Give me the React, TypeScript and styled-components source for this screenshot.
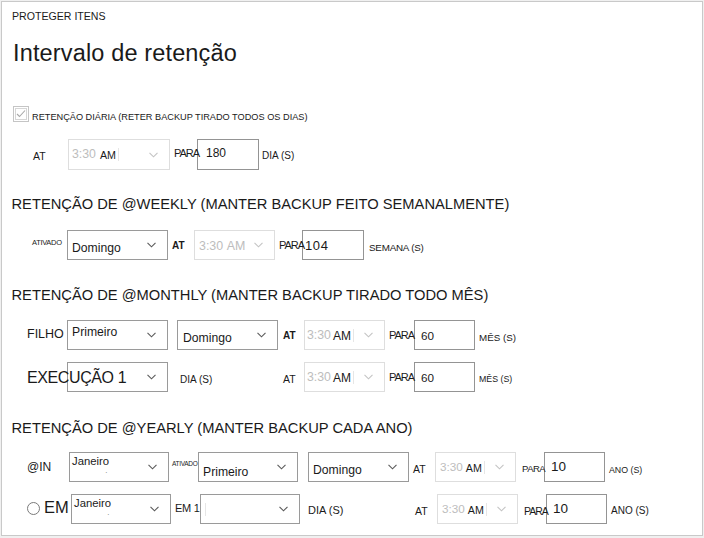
import React from "react";
import styled, { createGlobalStyle } from "styled-components";

const GlobalStyle = createGlobalStyle`
  html, body {
    margin: 0;
    padding: 0;
    background: #f0f0f0;
  }
  body {
    font-family: "Liberation Sans", Arial, sans-serif;
    color: #1a1a1a;
  }
`;

const Frame = styled.div`
  box-sizing: border-box;
  width: 702px;
  height: 535px;
  margin: 1px 0 0 1px;
  padding-top: 7px;
  background: #fff;
  border: 1px solid #c9c9c9;
  overflow: hidden;
`;

const Crumb = styled.div`
  height: 14px;
  line-height: 14px;
  padding-left: 10px;
  font-size: 10.6px;
`;

const Title = styled.h1`
  margin: 16px 0 0;
  height: 28px;
  line-height: 28px;
  padding-left: 11px;
  font-size: 23.5px;
  font-weight: normal;
  letter-spacing: 0.15px;
`;

const CheckLine = styled.div`
  display: flex;
  align-items: center;
  height: 16px;
  margin-top: 39px;
  padding-left: 11px;
`;

const DailyCaption = styled.span`
  margin: 6px 0 0 3px;
  font-size: 9.2px;
  white-space: nowrap;
`;

const Heading = styled.h2<{ $mt: number }>`
  margin: ${(p) => p.$mt}px 0 0;
  height: 20px;
  line-height: 20px;
  padding-left: 9.5px;
  font-size: 14.7px;
  font-weight: normal;
  white-space: nowrap;
`;

const Row = styled.div<{ $mt: number; $h: number; $pl: number }>`
  display: flex;
  align-items: center;
  height: ${(p) => p.$h}px;
  margin-top: ${(p) => p.$mt}px;
  padding-left: ${(p) => p.$pl}px;
  & > * {
    flex-shrink: 0;
  }
`;

const Label = styled.span<{
  $w?: number;
  $pl?: number;
  $size: number;
  $dy?: number;
  $bold?: boolean;
  $ls?: number;
}>`
  box-sizing: border-box;
  position: relative;
  z-index: 1;
  width: ${(p) => (p.$w ? `${p.$w}px` : "auto")};
  padding-left: ${(p) => p.$pl ?? 0}px;
  margin-top: ${(p) => Math.max(0, (p.$dy ?? 0) * 2)}px;
  margin-bottom: ${(p) => Math.max(0, -(p.$dy ?? 0) * 2)}px;
  font-size: ${(p) => p.$size}px;
  font-weight: ${(p) => (p.$bold ? "bold" : "normal")};
  letter-spacing: ${(p) => p.$ls ?? 0}px;
  line-height: 1.2;
  white-space: nowrap;
`;

const Spacer = styled.span<{ $w: number }>`
  width: ${(p) => p.$w}px;
`;

const Box = styled.div<{ $w: number; $pl: number; $disabled?: boolean }>`
  box-sizing: border-box;
  display: flex;
  align-items: center;
  width: ${(p) => p.$w}px;
  height: 100%;
  padding-left: ${(p) => p.$pl}px;
  border: 1px solid ${(p) => (p.$disabled ? "#dedede" : "#9a9a9a")};
  background: transparent;
  white-space: nowrap;
`;

const BoxText = styled.span<{ $size: number; $shift?: number; $ls?: number; $color?: string }>`
  margin-top: ${(p) => Math.max(0, (p.$shift ?? 0) * 2)}px;
  margin-bottom: ${(p) => Math.max(0, -(p.$shift ?? 0) * 2)}px;
  font-size: ${(p) => p.$size}px;
  letter-spacing: ${(p) => p.$ls ?? 0}px;
  color: ${(p) => p.$color ?? "#1a1a1a"};
  line-height: 1.2;
`;

const Tick = styled.span`
  margin-left: -4px;
  font-size: 7px;
  color: #555;
  vertical-align: -7px;
`;

const Caret = styled.span<{ $gap: number }>`
  width: 1px;
  height: 13px;
  margin-left: ${(p) => p.$gap}px;
  background: #e6e6e6;
`;

const ChevronIcon = styled.svg`
  margin-left: auto;
  margin-right: 11px;
  flex-shrink: 0;
`;

const Radio = styled.span`
  box-sizing: border-box;
  width: 13px;
  height: 13px;
  border: 1px solid #7a7a7a;
  border-radius: 50%;
`;

const RadioCell = styled.span<{ $w: number }>`
  display: flex;
  align-items: center;
  width: ${(p) => p.$w}px;
  position: relative;
  z-index: 1;
  & > span:last-child {
    margin-left: 4px;
    margin-bottom: 3px;
    font-size: 16.5px;
    line-height: 1.2;
  }
`;

const Chevron = ({ faded }: { faded?: boolean }) => (
  <ChevronIcon width="9" height="6" viewBox="0 0 9 6">
    <polyline
      points="0.5,0.8 4.5,4.8 8.5,0.8"
      fill="none"
      stroke={faded ? "#c4c4c4" : "#5a5a5a"}
      strokeWidth="1.1"
    />
  </ChevronIcon>
);

type DropdownProps = {
  w: number;
  pl?: number;
  size?: number;
  shift?: number;
  text?: string;
  tick?: boolean;
  caret?: boolean;
};

const Dropdown = ({ w, pl = 4, size = 12.2, shift = 0, text, tick, caret }: DropdownProps) => (
  <Box $w={w} $pl={pl}>
    {caret && <Caret $gap={0} />}
    {text && (
      <BoxText $size={size} $shift={shift}>
        {text}
        {tick && <Tick>ˏ</Tick>}
      </BoxText>
    )}
    <Chevron />
  </Box>
);

type TimeProps = {
  w: number;
  pl: number;
  num: number;
  am: number;
  gap: number;
  dark?: boolean;
  caret?: boolean;
  shift?: number;
};

const TimeSelect = ({ w, pl, num, am, gap, dark, caret, shift = 0 }: TimeProps) => (
  <Box $w={w} $pl={pl} $disabled>
    <BoxText $size={num} $shift={shift} $color="#bdbdbd">
      3:30
    </BoxText>
    <BoxText
      $size={am}
      $shift={shift + 0.8}
      $color={dark ? "#1a1a1a" : "#bdbdbd"}
      style={{ marginLeft: gap }}
    >
      AM
    </BoxText>
    {caret && <Caret $gap={2} />}
    <Chevron faded />
  </Box>
);

const NumBox = ({
  w,
  pl,
  size,
  value,
  shift = 0,
  ls,
}: {
  w: number;
  pl: number;
  size: number;
  value: string;
  shift?: number;
  ls?: number;
}) => (
  <Box $w={w} $pl={pl} style={{ borderColor: "#949494" }}>
    <BoxText $size={size} $shift={shift} $ls={ls}>
      {value}
    </BoxText>
  </Box>
);

const CheckBox = () => (
  <svg width="16" height="16" viewBox="0 0 16 16">
    <rect x="0.5" y="0.5" width="15" height="15" fill="none" stroke="#8a8a8a" strokeDasharray="1 1" />
    <rect x="2.5" y="2.5" width="11" height="11" fill="none" stroke="#d6d6d6" />
    <polyline points="4,8 6.5,10.5 12,4.5" fill="none" stroke="#a8a8a8" strokeWidth="1.1" />
  </svg>
);

export default function App(): JSX.Element {
  return (
    <>
      <GlobalStyle />
      <Frame>
        <Crumb>PROTEGER ITENS</Crumb>
        <Title>Intervalo de retenção</Title>

        <CheckLine>
          <CheckBox />
          <DailyCaption>RETENÇÃO DIÁRIA (RETER BACKUP TIRADO TODOS OS DIAS)</DailyCaption>
        </CheckLine>

        <Row $mt={17} $h={31} $pl={31}>
          <Label $w={35} $size={10.5} $dy={1.5}>AT</Label>
          <TimeSelect w={102} pl={3} num={12.3} am={10.7} gap={4} dark caret />
          <Label $w={27} $pl={4} $size={11} $ls={-1} $dy={-1}>PARA</Label>
          <NumBox w={62} pl={8} size={12} value="180" shift={-1} />
          <Label $pl={3} $size={10} $dy={1.5}>DIA (S)</Label>
        </Row>

        <Heading $mt={24}>RETENÇÃO DE @WEEKLY (MANTER BACKUP FEITO SEMANALMENTE)</Heading>

        <Row $mt={16} $h={30} $pl={30}>
          <Label $w={35} $size={7.5} $ls={-0.3} $dy={-2.5}>ATIVADO</Label>
          <Dropdown w={101} text="Domingo" shift={3} />
          <Label $w={26} $pl={4} $size={10} $bold $dy={0.7}>AT</Label>
          <TimeSelect w={81} pl={4} num={12.4} am={12.4} gap={3.5} shift={1} />
          <Label $w={27} $pl={4} $size={11} $ls={-1} $dy={1}>PARA</Label>
          <NumBox w={62} pl={2} size={13} ls={0.6} value="104" shift={1} />
          <Label $pl={5} $size={9.8} $ls={-0.2} $dy={2.7}>SEMANA (S)</Label>
        </Row>

        <Heading $mt={25}>RETENÇÃO DE @MONTHLY (MANTER BACKUP TIRADO TODO MÊS)</Heading>

        <Row $mt={15} $h={30} $pl={25}>
          <Label $w={40} $size={12.5} $dy={-0.5}>FILHO</Label>
          <Dropdown w={101} text="Primeiro" shift={-2.5} />
          <Spacer $w={9} />
          <Dropdown w={101} pl={5} text="Domingo" shift={3} />
          <Label $w={26} $pl={5} $size={10} $bold $dy={1}>AT</Label>
          <TimeSelect w={81} pl={2} num={12.3} am={12} gap={2} dark caret shift={0.5} />
          <Label $w={29} $pl={4} $size={11} $ls={-1} $dy={1}>PARA</Label>
          <NumBox w={61} pl={6} size={11.7} value="60" shift={1} />
          <Label $pl={4} $size={9.8} $dy={3}>MÊS (S)</Label>
        </Row>

        <Row $mt={12} $h={30} $pl={25}>
          <Label $w={40} $size={16} $ls={-0.4} $dy={1}>EXECUÇÃO 1</Label>
          <Dropdown w={101} />
          <Label $w={110} $pl={12} $size={10} $dy={3}>DIA (S)</Label>
          <Label $w={26} $pl={5} $size={10.5} $dy={2}>AT</Label>
          <TimeSelect w={81} pl={2} num={12.3} am={12} gap={2} dark caret shift={0.5} />
          <Label $w={29} $pl={4} $size={11} $ls={-1} $dy={1}>PARA</Label>
          <NumBox w={61} pl={6} size={11.7} value="60" shift={1} />
          <Label $pl={4} $size={8.8} $dy={2}>MÊS (S)</Label>
        </Row>

        <Heading $mt={26}>RETENÇÃO DE @YEARLY (MANTER BACKUP CADA ANO)</Heading>

        <Row $mt={14} $h={30} $pl={25}>
          <Label $w={42} $size={12} $dy={-0.3}>@IN</Label>
          <Dropdown w={100} pl={2} size={11.3} text="Janeiro" shift={-2} tick />
          <Label $w={29} $pl={3} $size={6.5} $ls={-0.3} $dy={-2.7}>ATIVADO</Label>
          <Dropdown w={100} text="Primeiro" shift={5} />
          <Spacer $w={10} />
          <Dropdown w={101} text="Domingo" shift={3} />
          <Label $w={26} $pl={4} $size={10.5} $dy={2.5}>AT</Label>
          <TimeSelect w={81} pl={4} num={11.7} am={10.7} gap={3} dark caret shift={0.5} />
          <Label $w={28} $pl={6} $size={9.5} $ls={-0.5} $dy={1.8}>PARA</Label>
          <NumBox w={61} pl={6} size={13.5} value="10" shift={-0.3} />
          <Label $pl={4} $size={8.8} $dy={3.3}>ANO (S)</Label>
        </Row>

        <Row $mt={12} $h={30} $pl={25}>
          <RadioCell $w={44}>
            <Radio />
            <span>EM</span>
          </RadioCell>
          <Dropdown w={100} pl={2} size={11.3} text="Janeiro" shift={-2} tick />
          <Label $w={29} $pl={4} $size={11} $ls={-0.3} $dy={-0.5}>EM 1</Label>
          <Dropdown w={100} caret />
          <Label $w={115} $pl={8} $size={11} $dy={2}>DIA (S)</Label>
          <Label $w={22} $size={10.5} $dy={2}>AT</Label>
          <TimeSelect w={81} pl={4} num={11.7} am={10.7} gap={3} dark caret shift={0.5} />
          <Label $w={28} $pl={6} $size={10.5} $ls={-1} $dy={1.8}>PARA</Label>
          <NumBox w={61} pl={6} size={13.5} value="10" />
          <Label $pl={4} $size={10} $dy={2}>ANO (S)</Label>
        </Row>
      </Frame>
    </>
  );
}
